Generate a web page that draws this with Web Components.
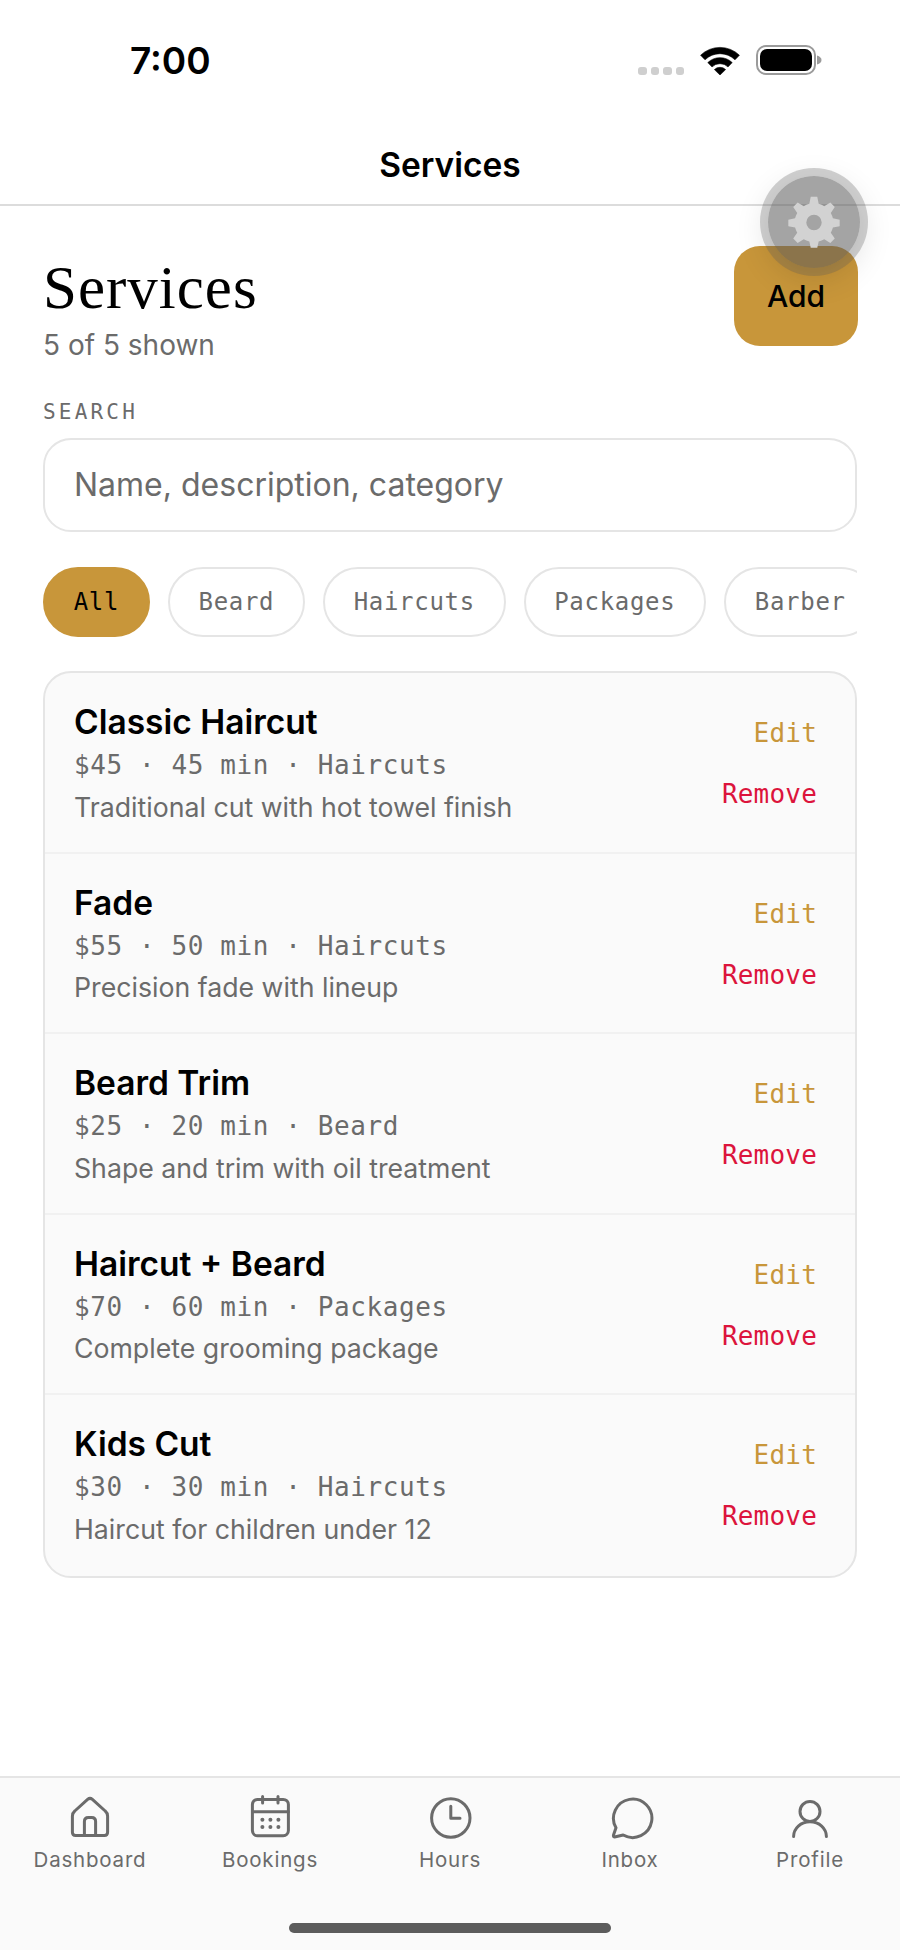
<!DOCTYPE html>
<html>
<head>
<meta charset="utf-8">
<title>Services</title>
<style>
html,body{margin:0;padding:0;background:#fff;}
body{width:900px;height:1950px;overflow:hidden;font-family:Inter,"Liberation Sans",sans-serif;}
</style>
</head>
<body>
<barber-app>
  <status-bar slot="top" time="7:00"></status-bar>
  <nav-header slot="top">Services</nav-header>
  <services-page>
    <filter-chip active>All</filter-chip>
    <filter-chip>Beard</filter-chip>
    <filter-chip>Haircuts</filter-chip>
    <filter-chip>Packages</filter-chip>
    <filter-chip>Barber</filter-chip>
    <service-row slot="rows" name="Classic Haircut" meta="$45 · 45 min · Haircuts" desc="Traditional cut with hot towel finish"></service-row>
    <service-row slot="rows" name="Fade" meta="$55 · 50 min · Haircuts" desc="Precision fade with lineup"></service-row>
    <service-row slot="rows" name="Beard Trim" meta="$25 · 20 min · Beard" desc="Shape and trim with oil treatment"></service-row>
    <service-row slot="rows" name="Haircut + Beard" meta="$70 · 60 min · Packages" desc="Complete grooming package"></service-row>
    <service-row slot="rows" name="Kids Cut" meta="$30 · 30 min · Haircuts" desc="Haircut for children under 12" last></service-row>
  </services-page>
  <tab-bar slot="bottom">
    <tab-item label="Dashboard" icon="home"></tab-item>
    <tab-item label="Bookings" icon="calendar"></tab-item>
    <tab-item label="Hours" icon="clock"></tab-item>
    <tab-item label="Inbox" icon="chat"></tab-item>
    <tab-item label="Profile" icon="person"></tab-item>
  </tab-bar>
  <settings-fab slot="over"></settings-fab>
</barber-app>

<script>
const MONO = '"DejaVu Sans Mono","Liberation Mono",monospace';
const SANS = 'Inter,"Liberation Sans",sans-serif';

function shadowFrom(el, html){
  let t = document.createElement("template");
  t.innerHTML = html;
  el.attachShadow({mode:"open"}).appendChild(t.content.cloneNode(true));
}

class BarberApp extends HTMLElement{
  constructor(){
    super();
    shadowFrom(this, `
    <style>
    :host{display:flex;flex-direction:column;position:relative;width:900px;height:1950px;background:#fff;overflow:hidden;}
    .main{flex:1;min-height:0;}
    </style>
    <slot name="top"></slot>
    <div class="main"><slot></slot></div>
    <slot name="bottom"></slot>
    <slot name="over"></slot>`);
  }
}

class StatusBar extends HTMLElement{
  constructor(){
    super();
    shadowFrom(this, `
    <style>
    :host{display:flex;align-items:flex-start;justify-content:space-between;height:110px;box-sizing:border-box;padding:40px 78px 0 130px;}
    .time{font:600 37px/42px ${SANS};color:#000;}
    .right{display:flex;align-items:flex-end;gap:16px;height:30px;margin-top:5px;}
    .dots{display:flex;gap:4px;}
    .dots i{width:8.5px;height:8px;border-radius:3px;background:#cfcfcf;display:block;}
    svg{display:block;}
    </style>
    <div class="time"></div>
    <div class="right">
      <div class="dots"><i></i><i></i><i></i><i></i></div>
      <svg width="40" height="30" viewBox="0 0 40 30">
        <g fill="#000" transform="translate(0,1)" stroke="#000" stroke-width=".6" stroke-linejoin="round">
          <path d="M.6 9.2 A28 28 0 0 1 39.4 9.2 L35 13.8 A21.5 21.5 0 0 0 5 13.8 Z"/>
          <path d="M7.8 16.6 A17.5 17.5 0 0 1 32.2 16.6 L28 20.9 A11.5 11.5 0 0 0 12 20.9 Z"/>
          <path d="M14.4 23.6 A8 8 0 0 1 25.6 23.6 L20 29 Z"/>
        </g>
      </svg>
      <svg width="66" height="30" viewBox="0 0 66 30">
        <rect x="1" y="1" width="58" height="28" rx="9" fill="none" stroke="#9b9b9b" stroke-width="2"/>
        <rect x="4" y="4" width="52" height="22" rx="7" fill="#000"/>
        <path d="M61 10.5 Q65.5 12 65.5 15 Q65.5 18 61 19.5 Z" fill="#9b9b9b"/>
      </svg>
    </div>`);
    this.shadowRoot.querySelector(".time").textContent = this.getAttribute("time");
  }
}

class NavHeader extends HTMLElement{
  constructor(){
    super();
    shadowFrom(this, `
    <style>
    :host{display:flex;align-items:center;justify-content:center;height:96px;box-sizing:border-box;padding-top:16px;border-bottom:2px solid #dcdcdc;font:600 33.5px/40px ${SANS};color:#000;}
    </style>
    <slot></slot>`);
  }
}

class ServicesPage extends HTMLElement{
  constructor(){
    super();
    shadowFrom(this, `
    <style>
    :host{display:block;padding:40px 43px 0;}
    .head{display:flex;justify-content:space-between;align-items:flex-start;}
    h1{margin:4px 0 0;font:400 61px/76px "Liberation Serif",serif;letter-spacing:1px;color:#000;}
    .sub{font:400 28px/34px ${SANS};color:#6b6b6b;margin-top:2px;}
    .add{width:124px;height:100px;margin-right:-1px;border-radius:26px;background:#c8963a;display:flex;align-items:center;justify-content:center;font:500 30px/36px ${SANS};color:#000;}
    .lbl{margin-top:37px;font:400 21px/26px ${MONO};letter-spacing:3.2px;color:#6b6b6b;}
    .search{margin-top:13px;height:94px;box-sizing:border-box;border:2px solid #e5e5e5;border-radius:28px;display:flex;align-items:center;padding:0 29px;font:400 32px/40px ${SANS};color:#6b6b6b;background:#fff;}
    .chips{margin-top:35px;display:flex;gap:18px;overflow:hidden;height:70px;}
    .list{margin-top:34px;border:2px solid #e5e5e5;border-radius:28px;background:#fafafa;overflow:hidden;}
    </style>
    <div class="head">
      <div>
        <h1>Services</h1>
        <div class="sub">5 of 5 shown</div>
      </div>
      <div class="add">Add</div>
    </div>
    <div class="lbl">SEARCH</div>
    <div class="search" role="textbox">Name, description, category</div>
    <div class="chips"><slot></slot></div>
    <div class="list"><slot name="rows"></slot></div>`);
  }
}

class FilterChip extends HTMLElement{
  constructor(){
    super();
    shadowFrom(this, `
    <style>
    :host{display:flex;flex:none;align-items:center;height:70px;box-sizing:border-box;padding:0 28.7px;border:2px solid #e5e5e5;border-radius:35px;font:400 24px/30px ${MONO};letter-spacing:.7px;color:#6b6b6b;background:#fff;}
    :host([active]){background:#c8963a;border-color:#c8963a;color:#000;}
    </style>
    <slot></slot>`);
  }
}

class ServiceRow extends HTMLElement{
  constructor(){
    super();
    shadowFrom(this, `
    <style>
    :host{display:flex;justify-content:space-between;height:180.5px;box-sizing:border-box;padding:29px 38px 0 29px;border-bottom:2px solid #f1f1f1;}
    :host([last]){border-bottom:none;}
    .name{font:600 33.5px/40px ${SANS};color:#000;}
    .meta{margin-top:7px;font:400 26px/32px ${MONO};letter-spacing:.6px;color:#6b6b6b;}
    .desc{margin-top:8.5px;font:400 26.7px/34px ${SANS};color:#6b6b6b;}
    .acts{display:flex;flex-direction:column;align-items:flex-end;gap:29px;padding-top:15px;font:400 26px/32px ${MONO};letter-spacing:.2px;}
    .edit{color:#c8963a;}
    .rm{color:#dc143c;}
    </style>
    <div>
      <div class="name"></div>
      <div class="meta"></div>
      <div class="desc"></div>
    </div>
    <div class="acts"><span class="edit">Edit</span><span class="rm">Remove</span></div>`);
    let r = this.shadowRoot;
    r.querySelector(".name").textContent = this.getAttribute("name");
    r.querySelector(".meta").textContent = this.getAttribute("meta");
    r.querySelector(".desc").textContent = this.getAttribute("desc");
  }
}

class TabBar extends HTMLElement{
  constructor(){
    super();
    shadowFrom(this, `
    <style>
    :host{display:block;height:174px;box-sizing:border-box;background:#fafafa;border-top:2px solid #e5e5e5;position:relative;}
    .tabs{display:grid;grid-template-columns:repeat(5,180px);}
    .home{position:absolute;left:289px;bottom:17px;width:322px;height:10px;border-radius:5px;background:#5c5c5c;}
    </style>
    <div class="tabs"><slot></slot></div>
    <div class="home"></div>`);
  }
}

const ICONS = {
  home:`<path d="M3.2 11.6 Q3.2 10 4.4 9 L10.8 3.2 Q12 2.2 13.2 3.2 L19.6 9 Q20.8 10 20.8 11.6 V19.6 Q20.8 21.2 19.2 21.2 H4.8 Q3.2 21.2 3.2 19.6 Z"/><path d="M9.2 21.2 V14.2 Q9.2 12.2 11.2 12.2 H12.8 Q14.8 12.2 14.8 14.2 V21.2"/>`,
  calendar:`<rect x="3.2" y="3.2" width="18" height="18.2" rx="2.6"/><path d="M3.2 9.4 H21.2 M8.3 1.8 V5 M16 1.8 V5"/><g fill="#6b6b6b" stroke="none"><circle cx="8.2" cy="13.4" r="1"/><circle cx="12.2" cy="13.4" r="1"/><circle cx="16.2" cy="13.4" r="1"/><circle cx="8.2" cy="17" r="1"/><circle cx="12.2" cy="17" r="1"/><circle cx="16.2" cy="17" r="1"/></g>`,
  clock:`<circle cx="12.4" cy="12.5" r="9.6"/><path d="M12.4 6.6 V12.6 H17"/>`,
  chat:`<path d="M5 17.4 A9.6 9.6 0 1 1 8.6 21 L4.8 21.9 Q3.4 22.2 3.8 20.9 Z"/>`,
  person:`<circle cx="12" cy="9.2" r="5"/><path d="M3.8 21.8 C3.8 17.6 7.4 14.4 12 14.4 S20.2 17.6 20.2 21.8"/>`
};

class TabItem extends HTMLElement{
  constructor(){
    super();
    shadowFrom(this, `
    <style>
    :host{display:flex;flex-direction:column;align-items:center;padding-top:15px;}
    svg{display:block;width:48px;height:48px;fill:none;stroke:#6b6b6b;stroke-width:1.5;stroke-linecap:round;stroke-linejoin:round;}
    .t{margin-top:6px;font:400 20.5px/26px ${SANS};letter-spacing:.8px;color:#6b6b6b;}
    </style>
    <svg viewBox="0 0 24 24">${ICONS[this.getAttribute("icon")]}</svg>
    <div class="t"></div>`);
    this.shadowRoot.querySelector(".t").textContent = this.getAttribute("label");
  }
}

class SettingsFab extends HTMLElement{
  constructor(){
    super();
    // floats over the header line and the Add button
    shadowFrom(this, `
    <style>
    :host{position:absolute;left:768px;top:176px;width:92px;height:92px;border-radius:50%;background:rgba(90,90,90,.55);box-shadow:0 0 0 8px rgba(90,90,90,.28),0 8px 34px rgba(0,0,0,.14);display:flex;align-items:center;justify-content:center;}
    svg{display:block;width:56px;height:56px;}
    </style>
    <svg viewBox="0 0 24 24"><path fill="#d2d2d2" fill-rule="evenodd" d="M10.6 1.2 H13.4 L14 4.2 Q15.3 4.6 16.4 5.3 L19 3.6 L20.9 5.6 L19.2 8.1 Q19.8 9.2 20.1 10.4 L23 11 V13.8 L20.1 14.4 Q19.8 15.6 19.2 16.6 L20.9 19.1 L19 21 L16.4 19.4 Q15.3 20 14 20.4 L13.4 23 H10.6 L10 20.4 Q8.7 20 7.6 19.4 L5 21 L3.1 19.1 L4.8 16.6 Q4.2 15.6 3.9 14.4 L1 13.8 V11 L3.9 10.4 Q4.2 9.2 4.8 8.1 L3.1 5.6 L5 3.6 L7.6 5.3 Q8.7 4.6 10 4.2 Z M12 8.9 A3.3 3.3 0 1 0 12 15.5 A3.3 3.3 0 1 0 12 8.9 Z"/></svg>`);
  }
}

customElements.define("barber-app",BarberApp);
customElements.define("status-bar",StatusBar);
customElements.define("nav-header",NavHeader);
customElements.define("services-page",ServicesPage);
customElements.define("filter-chip",FilterChip);
customElements.define("service-row",ServiceRow);
customElements.define("tab-bar",TabBar);
customElements.define("tab-item",TabItem);
customElements.define("settings-fab",SettingsFab);
</script>
</body>
</html>
